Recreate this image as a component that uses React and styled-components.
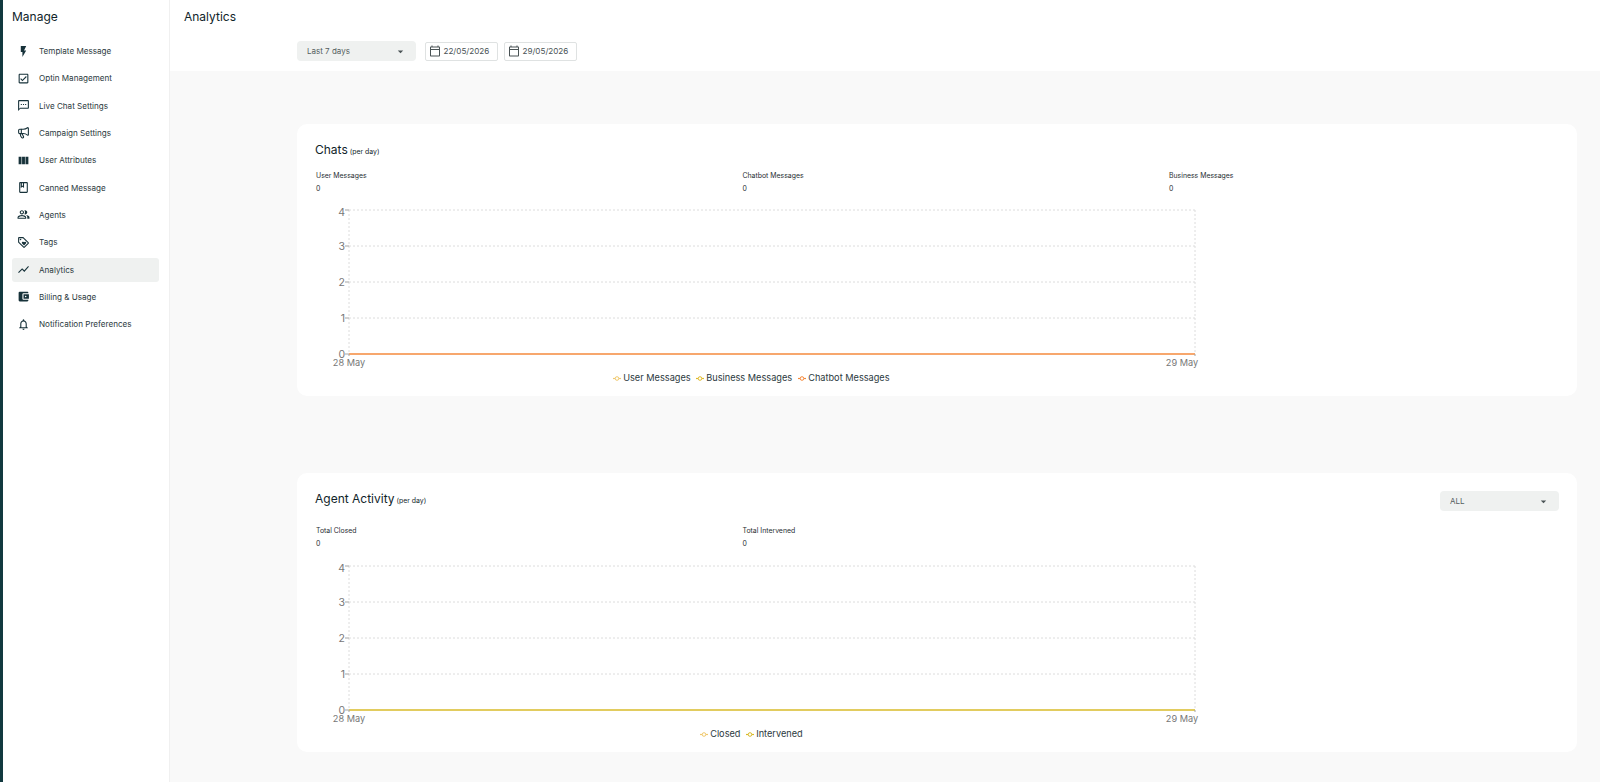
import styled, { createGlobalStyle } from 'styled-components';
import { Megaphone } from 'lucide-react';
import {
  MdFlashOn,
  MdOutlineCheckBox,
  MdOutlineTextsms,
  MdViewColumn,
  MdOutlineBook,
  MdOutlinePeopleAlt,
  MdOutlineLoyalty,
  MdShowChart,
  MdAccountBalanceWallet,
  MdOutlineNotifications,
  MdArrowDropDown,
  MdOutlineCalendarToday,
} from 'react-icons/md';

const GlobalStyle = createGlobalStyle`
  html, body {
    margin: 0;
    padding: 0;
    height: 100%;
    overflow: hidden;
    font-family: Inter, "Liberation Sans", sans-serif;
    color: #1b2b2f;
  }
  * { box-sizing: border-box; }
`;

const Page = styled.div`
  display: flex;
  width: 1600px;
  height: 782px;
  background: #f9f9f9;
  overflow: hidden;
`;

const Sidebar = styled.aside`
  flex: 0 0 170px;
  height: 100%;
  background: #fff;
  border-left: 3px solid #12393f;
  border-right: 1px solid #f0f0f0;
  padding: 0 10px 0 9px;
`;

const SideTitle = styled.h2`
  margin: 0;
  padding-top: 8px;
  height: 39px;
  font-size: 12px;
  line-height: 17px;
  font-weight: 400;
  color: #10242a;
`;

const NavList = styled.nav`
  display: flex;
  flex-direction: column;
  gap: 3.33px;
`;

const NavItem = styled.div`
  display: flex;
  align-items: center;
  height: 24px;
  padding-left: 5px;
  border-radius: 3px;
  background: ${(p) => (p.$active ? '#eff1f0' : 'transparent')};
  font-size: 8.1px;
  color: #2c3a3e;
  svg {
    flex: 0 0 13px;
    width: 13px;
    height: 13px;
    margin-right: 9px;
    color: #17323a;
  }
`;

const Main = styled.main`
  flex: 1;
  min-width: 0;
`;

const TopBar = styled.header`
  height: 71px;
  background: #fff;
  padding: 9px 0 0 14px;
`;

const PageTitle = styled.h1`
  margin: 0;
  font-size: 12px;
  line-height: 16px;
  font-weight: 400;
  color: #10242a;
`;

const Filters = styled.div`
  display: flex;
  align-items: center;
  gap: 8.5px;
  margin: 16px 0 0 113px;
`;

const DateRange = styled.div`
  display: flex;
  gap: 6px;
`;

const Select = styled.div`
  display: flex;
  align-items: center;
  justify-content: space-between;
  width: 119px;
  height: 20px;
  padding: 0 9px 0 10px;
  background: #eff1f0;
  border-radius: 4px;
  font-size: 8px;
  color: #555e60;
  svg {
    width: 13px;
    height: 13px;
    color: #4a5355;
  }
`;

const DateBox = styled.div`
  display: flex;
  align-items: center;
  width: 73px;
  height: 19px;
  padding-left: 3px;
  background: #fff;
  border: 1px solid #dfe2e2;
  border-radius: 2px;
  font-size: 8.1px;
  color: #4a5355;
  svg {
    width: 12px;
    height: 12px;
    margin-right: 3px;
    color: #4a5355;
  }
`;

const Content = styled.div`
  padding: 53px 23px 0 127px;
  display: flex;
  flex-direction: column;
  gap: 77px;
`;

const Card = styled.section`
  background: #fff;
  border-radius: 10px;
  padding: 18px 18px 0 19px;
  height: ${(p) => p.$height}px;
`;

const CardHead = styled.div`
  display: flex;
  align-items: flex-start;
  justify-content: space-between;
  min-height: ${(p) => p.$height}px;
`;

const CardTitle = styled.h3`
  margin: 0 0 0 -1px;
  font-size: 12px;
  line-height: 15px;
  font-weight: 400;
  color: #10242a;
  small {
    font-size: 6.9px;
    margin-left: 2px;
  }
`;

const Stats = styled.div`
  display: flex;
  margin-top: 11px;
`;

const Stat = styled.div`
  flex: 0 0 426.5px;
  font-size: 6.9px;
  line-height: 12.5px;
  color: #1f2e32;
`;

const ChartWrap = styled.div`
  margin: ${(p) => p.$gap}px 0 0 -19px;
`;

const GRID = '#dcdcdc';
const AXIS_TEXT = '#777';

// recharts-like line chart, all series sit on zero
function Chart({ series }) {
  const left = 52;
  const right = 898;
  const top = 9;
  const step = 36;
  const base = top + step * 4;
  return (
    <svg width="1000" height="190" style={{ display: 'block' }}>
      {[0, 1, 2, 3].map((i) => (
        <line key={i} x1={left} x2={right} y1={top + i * step} y2={top + i * step} stroke={GRID} strokeDasharray="2 2" />
      ))}
      <line x1={left} x2={left} y1={top} y2={base} stroke={GRID} strokeDasharray="2 2" />
      <line x1={right} x2={right} y1={top} y2={base} stroke={GRID} strokeDasharray="2 2" />
      {[4, 3, 2, 1, 0].map((v, i) => (
        <g key={v}>
          <line x1={left - 4} x2={left} y1={top + i * step} y2={top + i * step} stroke="#a5a5a5" />
          <text x={left - 4} y={top + i * step + (i === 0 ? 6 : 4)} textAnchor="end" fontSize="10.5" fill={AXIS_TEXT}>{v}</text>
        </g>
      ))}
      <text x={left} y={base + 11.5} textAnchor="middle" fontSize="9.2" fill={AXIS_TEXT}>28 May</text>
      <text x={right - 13} y={base + 11.5} textAnchor="middle" fontSize="9.2" fill={AXIS_TEXT}>29 May</text>
      <line x1={left} x2={right} y1={base} y2={base} stroke={series[series.length - 1].color} strokeWidth="1.5" />
      <line x1={left} x2={left} y1={base} y2={base + 2} stroke="#a5a5a5" />
      <line x1={right} x2={right} y1={base} y2={base + 2} stroke="#a5a5a5" />
      {series.map((s) => (
        <g key={s.name}>
          <line x1={s.x} x2={s.x + 8} y1={base + 24.5} y2={base + 24.5} stroke={s.color} strokeWidth="1.2" />
          <circle cx={s.x + 4} cy={base + 24.5} r="1.8" fill="#fff" stroke={s.color} />
          <text x={s.x + 10.2} y={base + 27} fontSize="9.2" fill="#2c3a3e">{s.name}</text>
        </g>
      ))}
    </svg>
  );
}

const navItems = [
  ['Template Message', MdFlashOn],
  ['Optin Management', MdOutlineCheckBox],
  ['Live Chat Settings', MdOutlineTextsms],
  ['Campaign Settings', Megaphone],
  ['User Attributes', MdViewColumn],
  ['Canned Message', MdOutlineBook],
  ['Agents', MdOutlinePeopleAlt],
  ['Tags', MdOutlineLoyalty],
  ['Analytics', MdShowChart, true],
  ['Billing & Usage', MdAccountBalanceWallet],
  ['Notification Preferences', MdOutlineNotifications],
];

const chatSeries = [
  { name: 'User Messages', color: '#f0c96e', x: 316 },
  { name: 'Business Messages', color: '#e0bb2e', x: 399 },
  { name: 'Chatbot Messages', color: '#f58a3c', x: 501 },
];

const agentSeries = [
  { name: 'Closed', color: '#f0c96e', x: 403 },
  { name: 'Intervened', color: '#d9bb2a', x: 449 },
];

export default function App() {
  return (
    <Page>
      <GlobalStyle />
      <Sidebar>
        <SideTitle>Manage</SideTitle>
        <NavList>
          {navItems.map(([label, Icon, active]) => (
            <NavItem key={label} $active={active}>
              <Icon />
              {label}
            </NavItem>
          ))}
        </NavList>
      </Sidebar>
      <Main>
        <TopBar>
          <PageTitle>Analytics</PageTitle>
          <Filters>
            <Select>
              Last 7 days
              <MdArrowDropDown />
            </Select>
            <DateRange>
              <DateBox>
                <MdOutlineCalendarToday />
                22/05/2026
              </DateBox>
              <DateBox>
                <MdOutlineCalendarToday />
                29/05/2026
              </DateBox>
            </DateRange>
          </Filters>
        </TopBar>
        <Content>
          <Card $height={272}>
            <CardHead $height={15}>
              <CardTitle>Chats<small>(per day)</small></CardTitle>
            </CardHead>
            <Stats>
              <Stat>User Messages<br />0</Stat>
              <Stat>Chatbot Messages<br />0</Stat>
              <Stat>Business Messages<br />0</Stat>
            </Stats>
            <ChartWrap $gap={5.5}>
              <Chart series={chatSeries} />
            </ChartWrap>
          </Card>
          <Card $height={279}>
            <CardHead $height={23}>
              <CardTitle>Agent Activity<small>(per day)</small></CardTitle>
              <Select>
                ALL
                <MdArrowDropDown />
              </Select>
            </CardHead>
            <Stats>
              <Stat>Total Closed<br />0</Stat>
              <Stat>Total Intervened<br />0</Stat>
            </Stats>
            <ChartWrap $gap={6.5}>
              <Chart series={agentSeries} />
            </ChartWrap>
          </Card>
        </Content>
      </Main>
    </Page>
  );
}
